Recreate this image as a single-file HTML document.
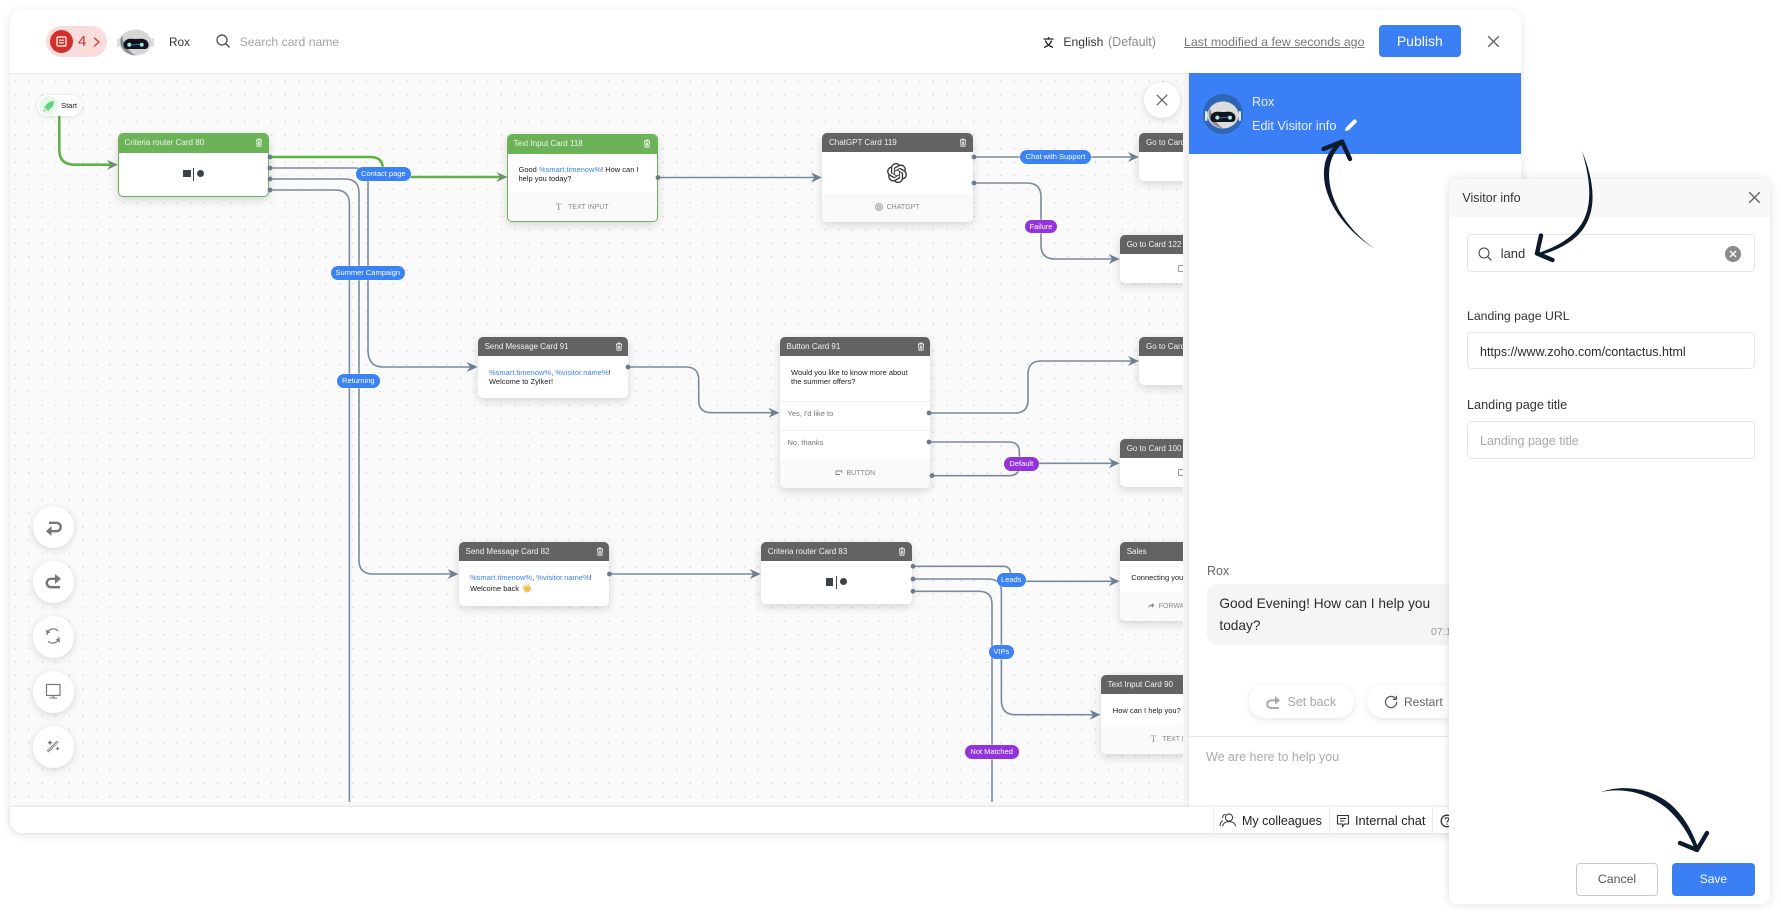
<!DOCTYPE html>
<html>
<head>
<meta charset="utf-8">
<title>Visitor info</title>
<style>
html,body{margin:0;padding:0;width:1781px;height:914px;overflow:hidden;background:#fff;font-family:"Liberation Sans",sans-serif}
*{box-sizing:border-box}
.a{position:absolute}
.t{position:absolute;white-space:nowrap;line-height:20px;height:20px}
.win{position:absolute;left:10px;top:10px;width:1511px;height:823px;background:#fff;border-radius:12px;box-shadow:0 2px 10px rgba(0,0,0,.12)}
.canvasbg{position:absolute;left:10px;top:73px;width:1173px;height:734px;background-color:#fafafa;background-image:radial-gradient(circle at center,#d9d9d9 0,#d9d9d9 .65px,transparent 1.05px);background-size:13.5px 13.5px;background-position:-1.45px 1.55px}
.clip{position:absolute;left:0;top:0;width:1781px;height:914px;clip-path:inset(73px 598px 107px 10px)}
.card{position:absolute;background:#fff;border-radius:5px;box-shadow:0 3px 9px rgba(0,0,0,.15);overflow:hidden}
.card.g{border:1.5px solid #6bb356}
.hd{position:absolute;left:0;top:0;right:0;height:19px;background:#636363;color:#f2f2f2;font-size:8px;line-height:19px;padding-left:7px;white-space:nowrap}
.g .hd{background:#6bb356;left:-1px;right:-1px;top:-1px;height:20px;padding-left:6.5px}
.ft{position:absolute;left:0;right:0;bottom:0;background:#fafafa}
.bd{position:absolute;font-size:7.5px;line-height:9px;color:#1a1a1a;white-space:nowrap}
.bd b{font-weight:normal;color:#3b82f6}
.mut{position:absolute;font-size:7px;color:#888;line-height:10px;white-space:nowrap}
.pill{position:absolute;border-radius:8px;color:#fff;font-size:7.5px;text-align:center;white-space:nowrap;background:#3b82f6;box-shadow:0 0 0 .5px rgba(255,255,255,.6)}
.pill.p{background:#9333de}
.tr{position:absolute;top:5px}
.sq{position:absolute;background:#3c4248}
.fab{position:absolute;left:32.5px;width:41.5px;height:41.5px;border-radius:50%;background:#fff;box-shadow:0 2px 8px rgba(0,0,0,.14)}
.in{position:absolute;border:1px solid #e6e6e6;border-radius:4px;background:#fff}
</style>
</head>
<body>
<div class="win"></div>
<div class="canvasbg"></div>

<div class="clip">
  <!-- Start -->
  <div class="a" style="left:37px;top:95px;width:45px;height:21px;background:#fff;border-radius:11px;box-shadow:0 1px 5px rgba(0,0,0,.12)"></div>
  <div class="a" style="left:38.5px;top:96px;width:19px;height:19px;background:#e6f9ea;border-radius:50%"></div>
  <svg class="a" style="left:41.5px;top:99.5px" width="13" height="13" viewBox="0 0 12 12"><path d="M11 1 C7 1 4.5 3 3.2 5.6 L1.2 6.2 L3 7.2 L4.8 9 L5.8 10.8 L6.4 8.8 C9 7.5 11 5 11 1Z" fill="#5fd27a"/><path d="M2.6 8.2 L.8 11.2 L3.8 9.4Z" fill="#5fd27a"/></svg>
  <div class="t" style="left:61px;top:96px;font-size:7.6px;color:#222">Start</div>

  <!-- Criteria 80 -->
  <div class="card g" style="left:118px;top:133px;width:151px;height:64px">
    <div class="hd">Criteria router Card 80<svg class="tr" style="left:137px" width="8" height="9" viewBox="0 0 8 9"><path d="M1 2H7M3 2V1H5V2M1.6 2L2 8.2H6L6.4 2M3.3 3.5V7M4.7 3.5V7" fill="none" stroke="#fff" stroke-width=".8"/></svg></div>
  </div>
  <div class="sq" style="left:183px;top:170px;width:7.5px;height:7px"></div>
  <div class="sq" style="left:192.8px;top:168px;width:1.2px;height:13px"></div>
  <div class="sq" style="left:197px;top:170.3px;width:7px;height:7px;border-radius:50%"></div>

  <!-- Text Input 118 -->
  <div class="card g" style="left:507px;top:133.5px;width:150.5px;height:88px">
    <div class="hd">Text Input Card 118<svg class="tr" style="left:136px" width="8" height="9" viewBox="0 0 8 9"><path d="M1 2H7M3 2V1H5V2M1.6 2L2 8.2H6L6.4 2M3.3 3.5V7M4.7 3.5V7" fill="none" stroke="#fff" stroke-width=".8"/></svg></div>
    <div class="bd" style="left:10.5px;top:30.5px">Good <b>%smart.timenow%</b>! How can I</div>
    <div class="bd" style="left:10.5px;top:39.5px">help you today?</div>
    <div class="ft" style="height:29px"></div>
    <div class="mut" style="left:48px;top:67px;font-size:9px;font-family:'Liberation Serif',serif">T</div>
    <div class="mut" style="left:60px;top:68.5px">TEXT INPUT</div>
  </div>

  <!-- ChatGPT 119 -->
  <div class="card" style="left:822px;top:133px;width:150.5px;height:89px">
    <div class="hd">ChatGPT Card 119<svg class="tr" style="left:137px" width="8" height="9" viewBox="0 0 8 9"><path d="M1 2H7M3 2V1H5V2M1.6 2L2 8.2H6L6.4 2M3.3 3.5V7M4.7 3.5V7" fill="none" stroke="#fff" stroke-width=".8"/></svg></div>
    <svg class="a" style="left:65px;top:30px" width="20" height="20" viewBox="0 0 24 24"><path fill="#333" d="M22.2819 9.8211a5.9847 5.9847 0 0 0-.5157-4.9108 6.0462 6.0462 0 0 0-6.5098-2.9A6.0651 6.0651 0 0 0 4.9807 4.1818a5.9847 5.9847 0 0 0-3.9977 2.9 6.0462 6.0462 0 0 0 .7427 7.0966 5.98 5.98 0 0 0 .511 4.9107 6.051 6.051 0 0 0 6.5146 2.9001A5.9847 5.9847 0 0 0 13.2599 24a6.0557 6.0557 0 0 0 5.7718-4.2058 5.9894 5.9894 0 0 0 3.9977-2.9001 6.0557 6.0557 0 0 0-.7475-7.0729zm-9.022 12.6081a4.4755 4.4755 0 0 1-2.8764-1.0408l.1419-.0804 4.7783-2.7582a.7948.7948 0 0 0 .3927-.6813v-6.7369l2.02 1.1686a.071.071 0 0 1 .038.052v5.5826a4.504 4.504 0 0 1-4.4945 4.4944zm-9.6607-4.1254a4.4708 4.4708 0 0 1-.5346-3.0137l.142.0852 4.783 2.7582a.7712.7712 0 0 0 .7806 0l5.8428-3.3685v2.3324a.0804.0804 0 0 1-.0332.0615L9.74 19.9502a4.4992 4.4992 0 0 1-6.1408-1.6464zM2.3408 7.8956a4.485 4.485 0 0 1 2.3655-1.9728V11.6a.7664.7664 0 0 0 .3879.6765l5.8144 3.3543-2.0201 1.1685a.0757.0757 0 0 1-.071 0l-4.8303-2.7865A4.504 4.504 0 0 1 2.3408 7.872zm16.5963 3.8558L13.1038 8.364 15.1192 7.2a.0757.0757 0 0 1 .071 0l4.8303 2.7913a4.4944 4.4944 0 0 1-.6765 8.1042v-5.6772a.79.79 0 0 0-.407-.667zm2.0107-3.0231l-.142-.0852-4.7735-2.7818a.7759.7759 0 0 0-.7854 0L9.409 9.2297V6.8974a.0662.0662 0 0 1 .0284-.0615l4.8303-2.7866a4.4992 4.4992 0 0 1 6.6802 4.66zM8.3065 12.863l-2.02-1.1638a.0804.0804 0 0 1-.038-.0567V6.0742a4.4992 4.4992 0 0 1 7.3757-3.4537l-.142.0805L8.704 5.459a.7948.7948 0 0 0-.3927.6813zm1.0976-2.3654l2.602-1.4998 2.6069 1.4998v2.9994l-2.5974 1.4997-2.6067-1.4997Z"/></svg>
    <div class="ft" style="height:28px"></div>
    <svg class="a" style="left:52.5px;top:70px" width="8" height="8" viewBox="0 0 24 24"><circle cx="12" cy="12" r="10" fill="none" stroke="#999" stroke-width="3"/><circle cx="12" cy="12" r="4" fill="none" stroke="#999" stroke-width="3"/></svg>
    <div class="mut" style="left:64.6px;top:70px">CHATGPT</div>
  </div>

  <!-- Go to cards -->
  <div class="card" style="left:1139px;top:133px;width:70px;height:48px"><div class="hd">Go to Card 121</div></div>
  <div class="card" style="left:1119.7px;top:235px;width:90px;height:48px"><div class="hd">Go to Card 122</div><div class="a" style="left:58px;top:30px;width:6px;height:7px;border:1px solid #999;border-radius:1px"></div></div>
  <div class="card" style="left:1139px;top:337px;width:70px;height:48px"><div class="hd">Go to Card 121</div></div>
  <div class="card" style="left:1119.7px;top:439px;width:90px;height:48px"><div class="hd">Go to Card 100</div><div class="a" style="left:58px;top:30px;width:6px;height:7px;border:1px solid #999;border-radius:1px"></div></div>

  <!-- Send Message 91 -->
  <div class="card" style="left:477.6px;top:337px;width:150.5px;height:60.5px">
    <div class="hd">Send Message Card 91<svg class="tr" style="left:137px" width="8" height="9" viewBox="0 0 8 9"><path d="M1 2H7M3 2V1H5V2M1.6 2L2 8.2H6L6.4 2M3.3 3.5V7M4.7 3.5V7" fill="none" stroke="#fff" stroke-width=".8"/></svg></div>
    <div class="bd" style="left:11.4px;top:31px"><b>%smart.timenow%</b>, <b>%visitor.name%</b>!</div>
    <div class="bd" style="left:11.4px;top:40px">Welcome to Zylker!</div>
  </div>

  <!-- Button 91 -->
  <div class="card" style="left:779.5px;top:337px;width:150.8px;height:151px">
    <div class="hd">Button Card 91<svg class="tr" style="left:137px" width="8" height="9" viewBox="0 0 8 9"><path d="M1 2H7M3 2V1H5V2M1.6 2L2 8.2H6L6.4 2M3.3 3.5V7M4.7 3.5V7" fill="none" stroke="#fff" stroke-width=".8"/></svg></div>
    <div class="bd" style="left:11.5px;top:31px">Would you like to know more about</div>
    <div class="bd" style="left:11.5px;top:40px">the summer offers?</div>
    <div class="a" style="left:0;right:0;top:64px;height:1px;background:#eee"></div>
    <div class="bd" style="left:8px;top:71.5px;color:#777">Yes, I'd like to</div>
    <div class="a" style="left:0;right:0;top:93px;height:1px;background:#eee"></div>
    <div class="bd" style="left:8px;top:100.5px;color:#777">No, thanks</div>
    <div class="ft" style="height:29px"></div>
    <svg class="a" style="left:55px;top:133px" width="8" height="7" viewBox="0 0 8 7"><path d="M5 4.5H1V1H7V3" fill="none" stroke="#888" stroke-width=".9"/></svg>
    <div class="mut" style="left:67px;top:132px">BUTTON</div>
  </div>

  <!-- Send Message 82 -->
  <div class="card" style="left:458.5px;top:542.3px;width:150.5px;height:63.7px">
    <div class="hd">Send Message Card 82<svg class="tr" style="left:137px" width="8" height="9" viewBox="0 0 8 9"><path d="M1 2H7M3 2V1H5V2M1.6 2L2 8.2H6L6.4 2M3.3 3.5V7M4.7 3.5V7" fill="none" stroke="#fff" stroke-width=".8"/></svg></div>
    <div class="bd" style="left:11.5px;top:31px"><b>%smart.timenow%</b>, <b>%visitor.name%</b>!</div>
    <div class="bd" style="left:11.5px;top:42px">Welcome back</div>
    <svg class="a" style="left:62.5px;top:40px" width="11" height="11" viewBox="0 0 11 11"><path d="M1.2 3.2L4 6L2.6 1.6L5 5L4.8 .8L6.6 4.8L7.6 1.4L8.2 5.4L9.8 4.2C10.2 7.4 8.6 10.6 5.6 10.4C3.4 10.2 2.2 6.4 1.2 3.2Z" fill="#efc04f"/></svg>
  </div>

  <!-- Criteria 83 -->
  <div class="card" style="left:760.7px;top:542.3px;width:151.3px;height:61.7px">
    <div class="hd">Criteria router Card 83<svg class="tr" style="left:137px" width="8" height="9" viewBox="0 0 8 9"><path d="M1 2H7M3 2V1H5V2M1.6 2L2 8.2H6L6.4 2M3.3 3.5V7M4.7 3.5V7" fill="none" stroke="#fff" stroke-width=".8"/></svg></div>
  </div>
  <div class="sq" style="left:825.8px;top:578px;width:7.5px;height:7.5px"></div>
  <div class="sq" style="left:835.5px;top:576px;width:1.2px;height:13px"></div>
  <div class="sq" style="left:839.6px;top:578.3px;width:7px;height:7px;border-radius:50%"></div>

  <!-- Sales -->
  <div class="card" style="left:1119.7px;top:542.3px;width:90px;height:78.7px">
    <div class="hd">Sales</div>
    <div class="bd" style="left:11.5px;top:31px">Connecting you</div>
    <div class="ft" style="height:29px"></div>
    <svg class="a" style="left:27px;top:60px" width="8" height="7" viewBox="0 0 8 7"><path d="M1 6C1.5 3.5 3 2.5 5 2.5V1L7.5 3.5L5 5.5V4C3.5 4 2 4.5 1 6Z" fill="#888"/></svg>
    <div class="mut" style="left:39px;top:59.5px">FORWARD</div>
  </div>

  <!-- Text input 90 -->
  <div class="card" style="left:1100.6px;top:675.3px;width:110px;height:78.7px">
    <div class="hd">Text Input Card 90</div>
    <div class="bd" style="left:12.2px;top:31px">How can I help you?</div>
    <div class="ft" style="height:29px"></div>
    <div class="mut" style="left:50px;top:59px;font-size:9px;font-family:'Liberation Serif',serif">T</div>
    <div class="mut" style="left:61.5px;top:60px">TEXT INPUT</div>
  </div>

  <!-- connectors -->
  <svg class="a" style="left:0;top:0" width="1781" height="914" viewBox="0 0 1781 914" fill="none">
    <g stroke="#7b8a9c" stroke-width="1.6">
      <path d="M270 168H355Q368 168 368 181V350Q368 367 383 367H472"/>
      <path d="M270 179H345Q359 179 359 193V560Q359 574 373 574H453"/>
      <path d="M270 190H335Q349.4 190 349.4 204V802"/>
      <path d="M658 177.5H817"/>
      <path d="M974 157H1134"/>
      <path d="M974 183H1027Q1041 183 1041 197V245Q1041 259 1055 259H1115"/>
      <path d="M628 367H686Q698.7 367 698.7 380V400Q698.7 412.7 711 412.7H775"/>
      <path d="M929 413H1015Q1028 413 1028 400V374Q1028 361 1041 361H1134"/>
      <path d="M929 442H1009Q1019.4 442 1019.4 452V466Q1019.4 475.7 1009 475.7H932"/>
      <path d="M1030 463.3H1115"/>
      <path d="M609.4 574H756"/>
      <path d="M913 566.3H1003Q1010.6 566.3 1010.6 574"/>
      <path d="M913 579H988Q1001.4 579 1001.4 592V700Q1001.4 714.7 1015 714.7H1096"/>
      <path d="M913 591.3H979Q992 591.3 992 604V802"/>
      <path d="M1026 581.3H1115"/>
    </g>
    <g fill="#6f7f93">
      <path d="M477.6 367L466.6 362L470 367L466.6 372Z"/>
      <path d="M458.5 574L447.5 569L451 574L447.5 579Z"/>
      <path d="M822 177.5L811 172.5L814.5 177.5L811 182.5Z"/>
      <path d="M1139 157L1128 152L1131.5 157L1128 162Z"/>
      <path d="M1119.7 259L1108.7 254L1112.2 259L1108.7 264Z"/>
      <path d="M779.5 412.7L768.5 407.7L772 412.7L768.5 417.7Z"/>
      <path d="M1139 361L1128 356L1131.5 361L1128 366Z"/>
      <path d="M1119.7 463.3L1108.7 458.3L1112.2 463.3L1108.7 468.3Z"/>
      <path d="M760.7 574L749.7 569L753.2 574L749.7 579Z"/>
      <path d="M1119.7 581.3L1108.7 576.3L1112.2 581.3L1108.7 586.3Z"/>
      <path d="M1100.6 714.7L1089.6 709.7L1093.1 714.7L1089.6 719.7Z"/>
    </g>
    <g stroke="#5fb346" stroke-width="2.6">
      <path d="M59.3 116V150Q59.3 164.7 75 164.7H112"/>
      <path d="M270 157H370Q382.7 157 382.7 168"/>
      <path d="M410 177H503"/>
    </g>
    <g fill="#6f8f6a">
      <path d="M118 164.7L107 159.7L110.5 164.7L107 169.7Z"/>
      <path d="M507.5 177L496.5 172L500 177L496.5 182Z"/>
    </g>
    <g fill="#6d7a8c">
      <circle cx="270" cy="157" r="2.4"/><circle cx="270" cy="168" r="2.4"/><circle cx="270" cy="179" r="2.4"/><circle cx="270" cy="190" r="2.4"/>
      <circle cx="658" cy="177.5" r="2.4"/>
      <circle cx="974" cy="157" r="2.4"/><circle cx="974" cy="183" r="2.4"/>
      <circle cx="628" cy="367" r="2.4"/>
      <circle cx="929" cy="413" r="2.4"/><circle cx="929" cy="442" r="2.4"/><circle cx="932" cy="475.7" r="2.4"/>
      <circle cx="609.4" cy="574" r="2.4"/>
      <circle cx="913" cy="566.3" r="2.4"/><circle cx="913" cy="579" r="2.4"/><circle cx="913" cy="591.3" r="2.4"/>
    </g>
  </svg>

  <!-- labels -->
  <div class="pill" style="left:356px;top:167px;width:54.6px;height:14px;line-height:14px">Contact page</div>
  <div class="pill" style="left:331px;top:265.7px;width:73.5px;height:14.3px;line-height:14.3px">Summer Campaign</div>
  <div class="pill" style="left:337px;top:374.3px;width:42.6px;height:14px;line-height:14px">Returning</div>
  <div class="pill" style="left:1020px;top:149.7px;width:71px;height:14px;line-height:14px">Chat with Support</div>
  <div class="pill p" style="left:1025px;top:219.7px;width:32px;height:13.7px;line-height:13.7px">Failure</div>
  <div class="pill p" style="left:1004px;top:456.7px;width:34.6px;height:14px;line-height:14px">Default</div>
  <div class="pill" style="left:996.5px;top:573px;width:29.5px;height:13.7px;line-height:13.7px">Leads</div>
  <div class="pill" style="left:988.8px;top:645px;width:25.2px;height:13.7px;line-height:13.7px">VIPs</div>
  <div class="pill p" style="left:964.7px;top:745.3px;width:54px;height:13.7px;line-height:13.7px">Not Matched</div>

  <!-- floating buttons -->
  <div class="a" style="left:1144px;top:82px;width:36px;height:36px;border-radius:50%;background:#fff;box-shadow:0 2px 8px rgba(0,0,0,.14)"></div>
  <svg class="a" style="left:1156px;top:94px" width="12" height="12" viewBox="0 0 12 12"><path d="M.8.8L11.2 11.2M11.2.8L.8 11.2" stroke="#666" stroke-width="1.3"/></svg>

  <div class="fab" style="top:506px"></div>
  <div class="fab" style="top:561px"></div>
  <div class="fab" style="top:616px"></div>
  <div class="fab" style="top:671px"></div>
  <div class="fab" style="top:726px"></div>
  <svg class="a" style="left:0;top:500px" width="90" height="280" viewBox="0 500 90 280" fill="none">
    <path d="M49 522.8H56.5a4.2 4.2 0 0 1 0 8.4H50" stroke="#777" stroke-width="2.4"/>
    <path d="M51.5 526L46 531.2L51.5 536Z" fill="#777"/>
    <path d="M60 587.2H51a4.2 4.2 0 0 1 0-8.4H56" stroke="#777" stroke-width="2.4"/>
    <path d="M55 574L61 578.8L55 584Z" fill="#777"/>
    <path d="M47 635a6.3 6.3 0 0 1 11-4M59 637a6.3 6.3 0 0 1-11 4" stroke="#777" stroke-width="1.2"/>
    <path d="M46 629.5L50.5 632.5L46.5 633.5ZM60 642.5L55.5 639.5L59.5 638.5Z" fill="#777"/>
    <rect x="46.5" y="684.5" width="13.5" height="11" stroke="#777" stroke-width="1.2"/>
    <path d="M53.2 695.5V698M49.5 698H57" stroke="#777" stroke-width="1.1"/>
    <path d="M47.8 751.5L57.5 741.5" stroke="#777" stroke-width="3" stroke-dasharray="1.1 .7"/>
    <path d="M50 740L50.9 741.8L52.7 742.7L50.9 743.6L50 745.4L49.1 743.6L47.3 742.7L49.1 741.8ZM57.5 746.5L58.2 748L59.7 748.7L58.2 749.4L57.5 750.9L56.8 749.4L55.3 748.7L56.8 748Z" fill="#777"/>
  </svg>
</div>

<div class="a" style="left:1183px;top:73px;width:6px;height:734px;background:linear-gradient(to right,#fafafa,#ececec)"></div>

<!-- header -->
<div class="a" style="left:10px;top:73px;width:1511px;height:1px;background:#e9e9e9;box-shadow:0 1px 3px rgba(0,0,0,.06)"></div>
<div class="a" style="left:46px;top:26px;width:61px;height:31px;background:#fbdcdc;border-radius:16px"></div>
<div class="a" style="left:50px;top:30px;width:23px;height:23px;background:#d2302a;border-radius:50%"></div>
<svg class="a" style="left:56px;top:36px" width="11" height="11" viewBox="0 0 11 11" fill="none"><rect x="1" y="1" width="9" height="9" rx="1" stroke="#fff" stroke-width="1.2"/><path d="M3 4.2H8M3 6.8H8" stroke="#fff" stroke-width="1.1"/></svg>
<div class="t" style="left:78px;top:32px;font-size:15px;color:#c9302b">4</div>
<svg class="a" style="left:92.5px;top:36.5px" width="7" height="10" viewBox="0 0 7 10"><path d="M1 .6L6 5L1 9.4" fill="none" stroke="#c9302b" stroke-width="1.2"/></svg>

<svg class="a" style="left:117px;top:29px" width="37" height="28" viewBox="0 0 37 28">
  <rect x="0" y="9" width="3" height="9" rx="1.5" fill="#ddd"/><rect x="34" y="9" width="3" height="9" rx="1.5" fill="#ddd"/>
  <ellipse cx="18.5" cy="13.5" rx="16" ry="13" fill="#d6d6d6"/>
  <path d="M5 6C0.5 14 5 25 18.5 26.5C11 22 6 15 5 6Z" fill="#8b8b8b"/>
  <path d="M9 11C12 9 15 10 18.5 10C22 10 25 9 29 11C33 14 32 20 28 20H10C6 20 5 14 9 11Z" fill="#11141f"/>
  <circle cx="12.3" cy="15.7" r="2" fill="#9fe8d9"/><circle cx="24.7" cy="15.7" r="2" fill="#9fe8d9"/>
  <path d="M14.5 15.7C16.5 17.2 20.5 14.2 22.5 15.7" stroke="#4a78d0" stroke-width=".8" fill="none"/>
</svg>
<div class="t" style="left:169px;top:32px;font-size:11.8px;color:#333">Rox</div>
<svg class="a" style="left:216px;top:34px" width="15" height="14" viewBox="0 0 15 14" fill="none"><circle cx="6" cy="6" r="5" stroke="#444" stroke-width="1.2"/><path d="M9.7 9.6L13.6 13.4" stroke="#444" stroke-width="1.3"/></svg>
<div class="t" style="left:239.6px;top:32px;font-size:12.2px;color:#a3a3a3">Search card name</div>

<svg class="a" style="left:1043px;top:37px" width="11" height="11" viewBox="0 0 11 11" fill="none"><path d="M.5 2H10.5M5.5 0V2M2.4 3.5C3.5 7 6 9 10 10.5M8.6 3.5C7.5 7 5 9 1 10.5" stroke="#222" stroke-width="1.3"/></svg>
<div class="t" style="left:1063.4px;top:32px;font-size:12.2px;color:#333">English</div>
<div class="t" style="left:1108px;top:32px;font-size:12.5px;color:#8c8c8c">(Default)</div>
<div class="t" style="left:1184px;top:32px;font-size:12.4px;color:#777;text-decoration:underline">Last modified a few seconds ago</div>
<div class="a" style="left:1378.6px;top:25px;width:82.4px;height:32px;background:#3b7ff5;border-radius:4px;color:#fff;font-size:14px;text-align:center;line-height:32px">Publish</div>
<svg class="a" style="left:1487px;top:35px" width="13" height="13" viewBox="0 0 13 13"><path d="M1.2 1.2L11.8 11.8M11.8 1.2L1.2 11.8" stroke="#666" stroke-width="1.4"/></svg>

<!-- chat panel -->
<div class="a" style="left:1189px;top:73px;width:332px;height:734px;background:#fff"></div>
<div class="a" style="left:1189px;top:73px;width:332px;height:81px;background:#3a7ff5"></div>
<svg class="a" style="left:1202.5px;top:93.5px" width="40" height="40" viewBox="0 0 40 40">
  <circle cx="20" cy="20" r="20" fill="#2f66b5"/>
  <rect x="2" y="17" width="2.5" height="10" rx="1.2" fill="#dfe6f0"/><rect x="35.5" y="17" width="2.5" height="10" rx="1.2" fill="#dfe6f0"/>
  <ellipse cx="20" cy="21" rx="15.5" ry="13.5" fill="#dcdcdc"/>
  <path d="M7 14C3 22 8 33 20 34.5C13 29 9 22 7 14Z" fill="#8f8f8f"/>
  <path d="M10 19C13 17 17 18 20 18C23 18 27 17 30 19C34 22 33 28 29 28H11C7 28 6 22 10 19Z" fill="#11141f"/>
  <circle cx="14.3" cy="23.6" r="2" fill="#a4ecdd"/><circle cx="27" cy="23.6" r="2" fill="#a4ecdd"/>
  <path d="M16.5 23.6C18.5 25 22.5 22 24.8 23.6" stroke="#4a78d0" stroke-width=".8" fill="none"/>
</svg>
<div class="t" style="left:1252px;top:92px;font-size:12.5px;color:#eaf1ff">Rox</div>
<div class="t" style="left:1252px;top:116px;font-size:12.7px;color:#eaf1ff">Edit Visitor info</div>
<svg class="a" style="left:1344px;top:118px" width="14" height="14" viewBox="0 0 14 14"><path d="M1 13L1.8 9.6L9.8 1.6C10.3 1.1 11 1.1 11.5 1.6L12.6 2.7C13.1 3.2 13.1 3.9 12.6 4.4L4.6 12.4Z" fill="#fff"/></svg>

<div class="t" style="left:1207px;top:561px;font-size:12.5px;color:#666">Rox</div>
<div class="a" style="left:1207px;top:584px;width:300px;height:61px;background:#f5f5f5;border-radius:10px"></div>
<div class="t" style="left:1219.4px;top:594px;font-size:13.7px;color:#2c2c2c">Good Evening! How can I help you</div>
<div class="t" style="left:1219.4px;top:616px;font-size:13.7px;color:#2c2c2c">today?</div>
<div class="t" style="left:1431px;top:622px;font-size:10.5px;color:#999">07:15</div>

<div class="a" style="left:1249px;top:685px;width:105px;height:33px;background:#fff;border-radius:17px;box-shadow:0 2px 8px rgba(0,0,0,.1)"></div>
<svg class="a" style="left:1265px;top:695px" width="16" height="14" viewBox="0 0 16 14" fill="none"><path d="M14 13H6a3.6 3.6 0 0 1 0-7.6H11" stroke="#aaa" stroke-width="2"/><path d="M10 1L15 5.4L10 9.8Z" fill="#aaa"/></svg>
<div class="t" style="left:1287.5px;top:692px;font-size:12.5px;color:#a8a8a8">Set back</div>
<div class="a" style="left:1367px;top:685px;width:120px;height:33px;background:#fff;border-radius:17px;box-shadow:0 2px 8px rgba(0,0,0,.1)"></div>
<svg class="a" style="left:1384px;top:695px" width="14" height="14" viewBox="0 0 14 14" fill="none"><path d="M11.5 3.5A5.6 5.6 0 1 0 12.7 7" stroke="#555" stroke-width="1.2"/><path d="M12.4 .8V4.4H8.8" stroke="#555" stroke-width="1.2"/></svg>
<div class="t" style="left:1404px;top:692px;font-size:12px;color:#666">Restart</div>
<div class="a" style="left:1189px;top:736px;width:332px;height:1px;background:#e6e6e6"></div>
<div class="t" style="left:1206px;top:747px;font-size:12.5px;color:#aaa">We are here to help you</div>

<!-- footer -->
<div class="a" style="left:10px;top:807px;width:1511px;height:26px;background:#fff;border-radius:0 0 12px 12px;box-shadow:0 -1px 3px rgba(0,0,0,.1)"></div>
<div class="a" style="left:1212.5px;top:807px;width:1px;height:26px;background:#ececec"></div>
<div class="a" style="left:1329px;top:807px;width:1px;height:26px;background:#ececec"></div>
<div class="a" style="left:1432px;top:807px;width:1px;height:26px;background:#ececec"></div>
<svg class="a" style="left:1219px;top:813px" width="18" height="14" viewBox="0 0 18 14" fill="none" stroke="#333" stroke-width="1"><circle cx="10" cy="4.6" r="3.6"/><path d="M3.6 13.2C4.2 9.8 6.5 8.6 10 8.6C13.5 8.6 16 9.8 16.6 13.2"/><path d="M6.5 1.2C4.5 1.5 3.5 3 3.8 5M3.8 7.6C2 8.5 1.2 10.5 1 13"/></svg>
<div class="t" style="left:1242px;top:811px;font-size:12.5px;color:#222">My colleagues</div>
<svg class="a" style="left:1336px;top:814px" width="14" height="14" viewBox="0 0 14 14" fill="none" stroke="#333" stroke-width="1.1"><path d="M1.5 1.5H12.5V10H8.5L6.5 12.5V10H1.5Z"/><path d="M4 4.5H10M4 7H8.5"/></svg>
<div class="t" style="left:1355px;top:811px;font-size:12.8px;color:#222">Internal chat</div>
<svg class="a" style="left:1440px;top:814px" width="14" height="14" viewBox="0 0 14 14" fill="none"><circle cx="7" cy="7" r="5.8" stroke="#333" stroke-width="1.3"/><path d="M5.2 5.4C5.4 3.2 8.8 3.2 8.8 5.4C8.8 6.8 7 6.8 7 8.4M7 9.6V10.8" stroke="#333" stroke-width="1.1"/></svg>

<!-- Visitor info panel -->
<div class="a" style="left:1449.4px;top:179px;width:320.6px;height:725px;background:#fff;border-radius:8px;box-shadow:0 0 10px rgba(0,0,0,.13);overflow:hidden">
  <div class="a" style="left:0;top:0;right:0;height:38px;background:#f8f8f8"></div>
</div>
<div class="t" style="left:1462.4px;top:188px;font-size:12.5px;color:#333">Visitor info</div>
<svg class="a" style="left:1748px;top:191px" width="13" height="13" viewBox="0 0 13 13"><path d="M1.2 1.2L11.8 11.8M11.8 1.2L1.2 11.8" stroke="#666" stroke-width="1.4"/></svg>

<div class="in" style="left:1467px;top:234px;width:288px;height:38px"></div>
<svg class="a" style="left:1478px;top:246.5px" width="14" height="14" viewBox="0 0 14 14" fill="none"><circle cx="6" cy="6" r="5" stroke="#444" stroke-width="1.1"/><path d="M9.7 9.7L13.4 13.4" stroke="#444" stroke-width="1.2"/></svg>
<div class="t" style="left:1500.7px;top:243.5px;font-size:13px;color:#333">land</div>
<div class="a" style="left:1725px;top:245.5px;width:16px;height:16px;background:#8a8a8a;border-radius:50%"></div>
<svg class="a" style="left:1729px;top:249.5px" width="8" height="8" viewBox="0 0 8 8"><path d="M1 1L7 7M7 1L1 7" stroke="#fff" stroke-width="1.4"/></svg>

<div class="t" style="left:1467px;top:306px;font-size:12.3px;color:#333">Landing page URL</div>
<div class="in" style="left:1467px;top:332px;width:288px;height:37px"></div>
<div class="t" style="left:1480px;top:341.5px;font-size:12.5px;color:#2c2c2c">https://www.zoho.com/contactus.html</div>
<div class="t" style="left:1467px;top:395px;font-size:12.7px;color:#333">Landing page title</div>
<div class="in" style="left:1467px;top:421px;width:288px;height:38px"></div>
<div class="t" style="left:1480px;top:430.5px;font-size:12.5px;color:#aaa">Landing page title</div>

<div class="a" style="left:1575.7px;top:863px;width:82.7px;height:32.7px;background:#fff;border:1px solid #c9c9c9;border-radius:4px;color:#555;font-size:12.3px;text-align:center;line-height:31px">Cancel</div>
<div class="a" style="left:1671.8px;top:863px;width:83.2px;height:32.7px;background:#3b7ff5;border-radius:4px;color:#fff;font-size:12px;text-align:center;line-height:32.7px">Save</div>

<!-- hand-drawn arrows -->
<svg class="a" style="left:0;top:0;pointer-events:none" width="1781" height="914" viewBox="0 0 1781 914">
  <g fill="#0c1a2e">
    <path d="M1375 249C1342 228 1320 195 1324.5 166C1326 155 1332 147 1341 141L1343 143C1336 149 1331 157 1329.5 168C1326 196 1345 228 1375 249Z"/>
    <path d="M1582 151C1592 185 1594 215 1573 234C1562 244 1550 249 1538 253L1539 255.5C1552 252 1566 246 1576 237C1598 217 1596 185 1582 151Z"/>
    <path d="M1601 792C1625 784 1651 789 1669 803C1685 816 1694 835 1699 850L1695.5 851C1690 836 1680 819 1665 807C1648 794 1625 787 1601 792Z"/>
  </g>
  <g fill="none" stroke="#0c1a2e" stroke-linecap="round" stroke-linejoin="round" stroke-width="4.4">
    <path d="M1323.5 149L1342 141.5L1350 159"/>
    <path d="M1541 235.5L1537 253.5L1552.5 260"/>
    <path d="M1680 843L1697 850L1707 833"/>
  </g>
</svg>
</body>
</html>
